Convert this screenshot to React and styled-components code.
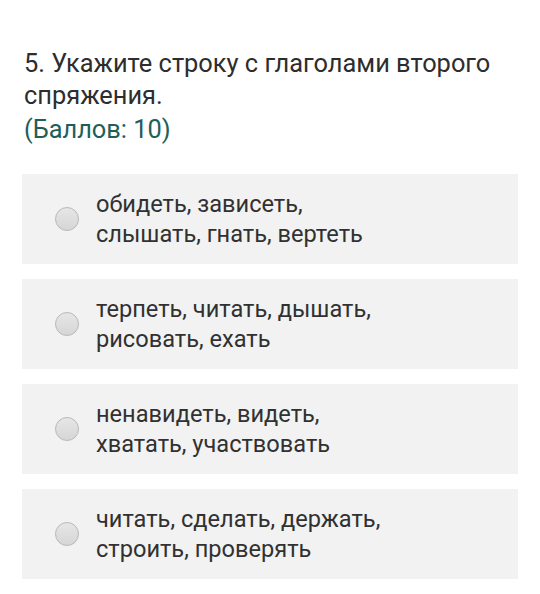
import React from "react";
import styled, { createGlobalStyle } from "styled-components";

const options = [
  ["обидеть, зависеть,", "слышать, гнать, вертеть"],
  ["терпеть, читать, дышать,", "рисовать, ехать"],
  ["ненавидеть, видеть,", "хватать, участвовать"],
  ["читать, сделать, держать,", "строить, проверять"],
];

const App = () => {
  return (
    <>
      <GlobalStyle />
      <Page>
        <Question>
          <Title>5. Укажите строку с глаголами второго спряжения.</Title>
          <Points>(Баллов: 10)</Points>
        </Question>
        <List>
          {options.map((lines, i) => (
            <Option key={i}>
              <Radio />
              <Label>
                {lines[0]}
                <br />
                {lines[1]}
              </Label>
            </Option>
          ))}
        </List>
      </Page>
    </>
  );
};

export default App;

const GlobalStyle = createGlobalStyle`
  body {
    margin: 0;
    background: #fff;
    font-family: Roboto, "Noto Sans", sans-serif;
  }
`;

const Page = styled.div`
  width: 540px;
  padding-top: 47px;
`;

const Question = styled.div`
  padding: 0 24px;
  font-size: 25.4px;
  line-height: 32px;
`;

const Title = styled.div`
  color: #2d2d2d;
  width: 480px;
`;

const Points = styled.div`
  margin-top: 2px;
  color: #215e58;
`;

const List = styled.div`
  display: flex;
  flex-direction: column;
  gap: 15px;
  margin: 29px 22px 0;
`;

const Option = styled.label`
  display: flex;
  align-items: center;
  height: 90px;
  background: #f2f2f2;
  padding-left: 33px;
  box-sizing: border-box;
`;

const Radio = styled.span`
  width: 24px;
  height: 24px;
  border-radius: 50%;
  box-sizing: border-box;
  border: 1px solid #b8b8b8;
  background: linear-gradient(#e6e6e6, #d6d6d6);
  flex-shrink: 0;
`;

const Label = styled.div`
  margin-left: 17px;
  font-size: 23.6px;
  line-height: 30px;
  color: #313131;
`;
